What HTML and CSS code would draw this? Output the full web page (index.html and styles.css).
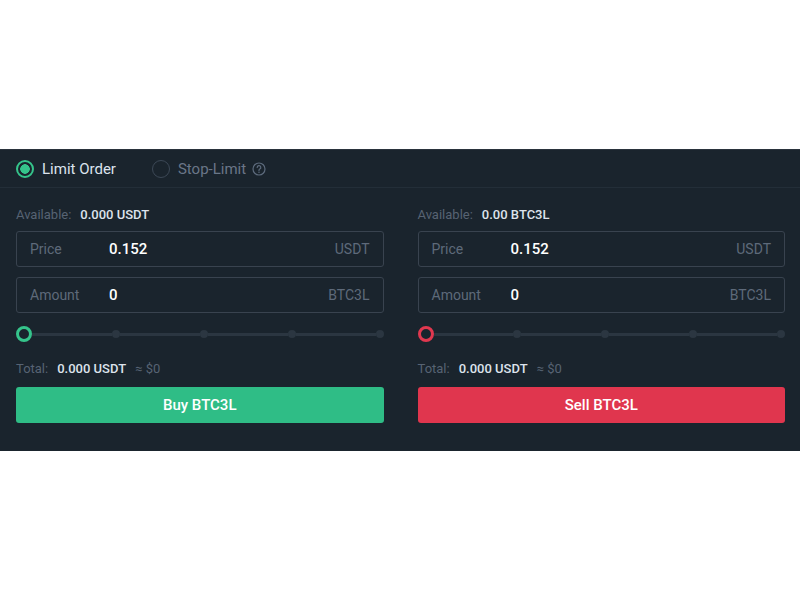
FILE: index.html
```html
<!DOCTYPE html>
<html>
<head>
<meta charset="utf-8">
<link rel="stylesheet" href="styles.css">
</head>
<body>
<div class="page">
  <div class="panel">
    <div class="tabs">
      <div class="tab active"><span class="radio on"></span><span>Limit Order</span></div>
      <div class="tab"><span class="radio"></span><span>Stop-Limit</span>
        <svg class="help" width="14" height="14" viewBox="0 0 14 14"><circle cx="7" cy="7" r="6" fill="none" stroke="#5d6b7d" stroke-width="1.2"/><path d="M5.2 5.4a1.8 1.8 0 1 1 2.6 1.6c-.6.3-.8.6-.8 1.2v.4" fill="none" stroke="#5d6b7d" stroke-width="1.2" stroke-linecap="round"/><circle cx="7" cy="10.3" r=".75" fill="#5d6b7d"/></svg>
      </div>
    </div>
    <div class="cols">
      <div class="col">
        <div class="avail"><span class="muted">Available:</span><span class="val">0.000 USDT</span></div>
        <div class="field"><span class="label">Price</span><span class="input">0.152</span><span class="unit">USDT</span></div>
        <div class="field"><span class="label">Amount</span><span class="input">0</span><span class="unit">BTC3L</span></div>
        <div class="slider"><span class="knob green"></span><span class="seg"></span><span class="dot"></span><span class="seg"></span><span class="dot"></span><span class="seg"></span><span class="dot"></span><span class="seg"></span><span class="dot"></span></div>
        <div class="total"><span class="muted">Total:</span><span class="val">0.000 USDT</span><span class="muted approx">≈ $0</span></div>
        <button class="btn buy">Buy BTC3L</button>
      </div>
      <div class="col">
        <div class="avail"><span class="muted">Available:</span><span class="val">0.00 BTC3L</span></div>
        <div class="field"><span class="label">Price</span><span class="input">0.152</span><span class="unit">USDT</span></div>
        <div class="field"><span class="label">Amount</span><span class="input">0</span><span class="unit">BTC3L</span></div>
        <div class="slider"><span class="knob red"></span><span class="seg"></span><span class="dot"></span><span class="seg"></span><span class="dot"></span><span class="seg"></span><span class="dot"></span><span class="seg"></span><span class="dot"></span></div>
        <div class="total"><span class="muted">Total:</span><span class="val">0.000 USDT</span><span class="muted approx">≈ $0</span></div>
        <button class="btn sell">Sell BTC3L</button>
      </div>
    </div>
  </div>
</div>
</body>
</html>
```
FILE: styles.css
```css
* { box-sizing: border-box; }
html, body { margin: 0; padding: 0; background: #ffffff; }
body { font-family: Roboto, "Liberation Sans", Arial, sans-serif; }
.page { width: 800px; height: 600px; padding-top: 149px; }
.panel { background: #1a242d; height: 302px; border-top: 1px solid #2a333c; }
.tabs { display: flex; align-items: center; height: 38px; padding-left: 16px; border-bottom: 1px solid #232e38; }
.tab { display: flex; align-items: center; font-size: 15px; color: #6a7688; margin-right: 36px; }
.tab.active { color: #dce3ee; }
.radio { width: 18px; height: 18px; border-radius: 50%; border: 1.5px solid #3c4856; margin-right: 8px; display: inline-block; }
.radio.on { border: 2px solid #35c48b; background: radial-gradient(circle, #35c48b 0 4.5px, #1a242d 5px); }
.help { margin-left: 6px; }
.cols { display: flex; gap: 34px; padding: 0 15px 0 16px; }
.col { flex: 1; display: flex; flex-direction: column; }
.avail { font-size: 13px; margin-top: 18px; height: 16px; display: flex; align-items: center; }
.muted { color: #576373; }
.val { color: #dde3ec; margin-left: 9px; font-weight: 500; }
.approx { margin-left: 9px; }
.field { height: 36px; border: 1px solid #39434f; border-radius: 3px; display: flex; align-items: center; padding: 0 13px 0 13px; font-size: 14px; margin-top: 9px; }
.field + .field { margin-top: 10px; }
.label { color: #5e6a7a; width: 79px; }
.input { color: #ffffff; font-size: 15px; flex: 1; font-weight: 500; }
.unit { color: #5e6a7a; }
.slider { display: flex; align-items: center; height: 16px; margin-top: 13px; padding-left: 0; }
.knob { width: 16px; height: 16px; border-radius: 50%; border: 3px solid #35c48b; background: #1a242d; flex: none; }
.knob.red { border-color: #e0384f; }
.seg { flex: 1; height: 3px; background: #2b3641; }
.dot { width: 8px; height: 8px; border-radius: 50%; background: #2b3641; flex: none; }
.total { font-size: 13px; margin-top: 18px; height: 16px; display: flex; align-items: center; }
.btn { margin-top: 11px; height: 36px; border: none; border-radius: 3px; color: #ffffff; font-family: inherit; font-size: 15px; font-weight: 500; cursor: pointer; }
.buy { background: #2fbd86; }
.sell { background: #e0364e; }
```
